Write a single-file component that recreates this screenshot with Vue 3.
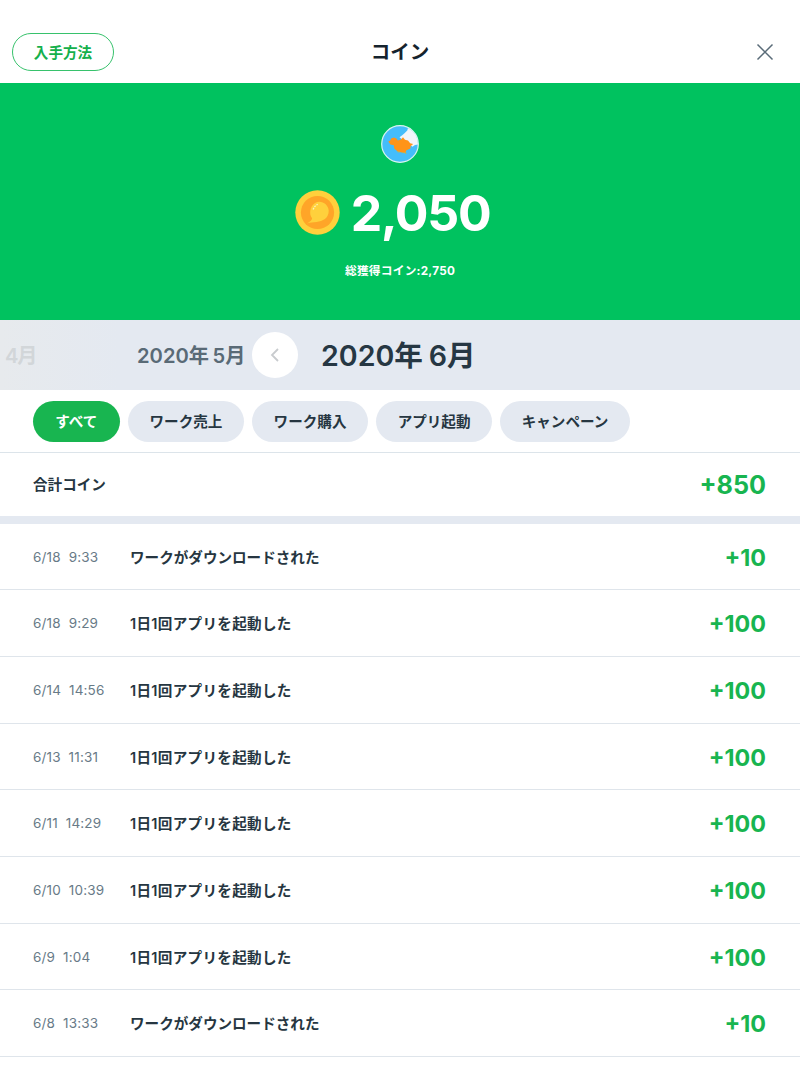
<template>
  <main class="coin-page">
    <header class="header">
      <button class="how-to">入手方法</button>
      <h1>コイン</h1>
      <button class="close" aria-label="閉じる">
        <svg width="18" height="18" viewBox="0 0 18 18">
          <path d="M1.5 1.5 16.5 16.5M16.5 1.5 1.5 16.5" fill="none" stroke="#596b78" stroke-width="1.5" />
        </svg>
      </button>
    </header>

    <section class="balance">
      <svg class="avatar" width="38" height="38" viewBox="0 0 38 38">
        <circle cx="19" cy="19" r="18.4" fill="#44bdfb" />
        <path d="M27 3.1 26.3 5.5 23.5 8.2 21.2 10.2 18.5 12.2 22 15 29.5 20.2 31.5 21.8 34 20 37 19.4A18.4 18.4 0 0 0 27 3.1Z" fill="#f2f5fa" />
        <path d="M7.3 16.6 9.2 15.4 10.2 13.4 13 12.4 15.4 13.6 16.8 15.4 20 14.4 22 12.3 24 14.8 27 15.6 29.2 18.2 32.1 19.1 29.6 21.3 29.4 23.5 25.4 25.2 24.5 27.2 20.5 27.5 16.4 26.3 13.2 23.6 12.8 20.2 9.4 19.5Z" fill="#ff9418" />
        <path d="M21.5 27.6H24.8V28.8M16.5 26.8H19" fill="none" stroke="#d8af35" stroke-width="1" />
        <circle cx="19" cy="19" r="18.3" fill="none" stroke="#d9f5ee" stroke-width="1.2" />
      </svg>
      <div class="amount">
        <svg width="45" height="45" viewBox="0 0 45 45">
          <circle cx="22.5" cy="22.5" r="22.2" fill="#ffd03c" />
          <circle cx="22.5" cy="22.5" r="16.6" fill="#ffa528" />
          <path d="M12.1 33.5C15.4 31.4 17 29.7 17.1 28.2 13.8 24.8 14.8 16.4 20 13.1 25.7 9.5 33.5 14.2 33.7 20.8 33.9 28.3 27.5 31.2 21.7 32.1 18 32.6 15.2 32.6 12.1 33.5Z" fill="#ffd03c" />
          <path d="M18.2 19.5Q19.2 16.2 22.7 14.2" fill="none" stroke="#fff1b9" stroke-width="1.3" stroke-dasharray="1.8 1" />
        </svg>
        <strong>2,050</strong>
      </div>
      <p class="total-earned">総獲得コイン:2,750</p>
    </section>

    <nav class="months">
      <span class="month older">4月</span>
      <span class="month previous">2020年 5月</span>
      <button class="month-back" aria-label="前の月">
        <svg width="10" height="16" viewBox="0 0 10 16">
          <path d="M8 2 2 8l6 6" fill="none" stroke="#c8cbce" stroke-width="1.8" />
        </svg>
      </button>
      <span class="month current">2020年 6月</span>
    </nav>

    <div class="filters">
      <button
        v-for="filter in filters"
        :key="filter"
        :class="{ active: filter === activeFilter }"
        @click="activeFilter = filter"
      >{{ filter }}</button>
    </div>

    <div class="summary">
      <span>合計コイン</span>
      <strong>+850</strong>
    </div>

    <ul class="history">
      <li v-for="item in history" :key="`${item.date}-${item.time}`">
        <span class="date">{{ item.date }}&nbsp; {{ item.time }}</span>
        <span class="label" :class="{ launched: item.label === launched }">{{ item.label }}</span>
        <strong>+{{ item.coins }}</strong>
      </li>
    </ul>
  </main>
</template>

<script setup>
import { ref } from 'vue'

const filters = ['すべて', 'ワーク売上', 'ワーク購入', 'アプリ起動', 'キャンペーン']
const activeFilter = ref('すべて')

const launched = '1日1回アプリを起動した'
const downloaded = 'ワークがダウンロードされた'

const history = [
  { date: '6/18', time: '9:33', label: downloaded, coins: 10 },
  { date: '6/18', time: '9:29', label: launched, coins: 100 },
  { date: '6/14', time: '14:56', label: launched, coins: 100 },
  { date: '6/13', time: '11:31', label: launched, coins: 100 },
  { date: '6/11', time: '14:29', label: launched, coins: 100 },
  { date: '6/10', time: '10:39', label: launched, coins: 100 },
  { date: '6/9', time: '1:04', label: launched, coins: 100 },
  { date: '6/8', time: '13:33', label: downloaded, coins: 10 }
]
</script>

<style>
body {
  overflow: hidden;
  background: #fff;
}
</style>

<style scoped>
.coin-page {
  width: 800px;
  height: 1067px;
  overflow: hidden;
  background: #fff;
  color: #263641;
  font-family: Inter, "Noto Sans CJK JP", sans-serif;
  font-size: 14.58px;
}

* {
  box-sizing: border-box;
}

button {
  padding: 0;
  border: 0;
  font: inherit;
}

.header {
  display: grid;
  grid-template-columns: 1fr auto 1fr;
  align-items: center;
  height: 83.4px;
  padding: 21px 26px 0 12px;
}

.how-to {
  width: 102px;
  height: 38px;
  padding-bottom: 2px;
  border: 1.4px solid #37c26c;
  border-radius: 19px;
  background: #fff;
  color: #15b04c;
  font-weight: 600;
}

h1 {
  margin: 0 0 0 14px;
  color: #15232d;
  font-size: 19.5px;
  font-weight: 600;
  line-height: 28px;
}

.close {
  display: grid;
  justify-self: end;
  background: none;
}

.balance {
  display: flex;
  flex-direction: column;
  align-items: center;
  height: 236.2px;
  padding-top: 41.5px;
  background: #00c25f;
  color: #fff;
}

.avatar {
  flex: none;
}

.amount {
  display: flex;
  align-items: center;
  gap: 11px;
  height: 60px;
  margin: 20px 15px 0 0;
}

.amount strong {
  font-size: 50px;
  font-weight: 700;
  line-height: 60px;
  letter-spacing: -1.3px;
}

.total-earned {
  margin: 19px 0 0;
  font-size: 11.7px;
  font-weight: 700;
  line-height: 18px;
  letter-spacing: 0.25px;
}

.months {
  display: flex;
  align-items: center;
  height: 70.6px;
  padding-left: 5px;
  background: linear-gradient(90deg, #e7eaed 0, #e4e9f1 120px, #e4e9f1 100%);
  white-space: nowrap;
}

.month {
  color: #596a76;
  font-size: 20.2px;
  font-weight: 600;
  word-spacing: -1.5px;
}

.older {
  width: 132px;
  color: #d2d6d9;
  letter-spacing: -1.3px;
}

.previous {
  width: 115px;
}

.month-back {
  display: grid;
  place-items: center;
  width: 46px;
  height: 46px;
  border-radius: 50%;
  background: #fff;
}

.current {
  margin: -2px 0 0 23px;
  color: #263743;
  font-size: 28.6px;
}

.filters {
  display: flex;
  gap: 8.4px;
  height: 63px;
  padding: 10.5px 33px 0;
  border-bottom: 1px solid #dce4ea;
}

.filters button {
  height: 41.6px;
  padding: 0 21.4px 1px;
  border-radius: 21px;
  background: #e4e9f1;
  color: #263641;
  font-weight: 600;
}

.filters .active {
  padding-right: 22.3px;
  padding-left: 22.3px;
  background: #18b550;
  color: #fff;
}

.summary {
  display: flex;
  align-items: center;
  justify-content: space-between;
  height: 70.6px;
  padding: 0 34px 0 33px;
  border-bottom: 8.3px solid #e4e9f1;
  font-weight: 600;
}

.summary span {
  padding-bottom: 2px;
}

.summary strong {
  padding-top: 1px;
  color: #18b550;
  font-size: 25.2px;
  font-weight: 700;
}

.history {
  margin: 0;
  padding: 0;
  list-style: none;
}

.history li {
  display: flex;
  align-items: center;
  height: 66.67px;
  padding: 0 34px 0 33px;
  border-bottom: 1px solid #dfe5eb;
}

.date {
  width: 97px;
  color: #687a87;
  font-size: 13.5px;
  letter-spacing: 0.16px;
  white-space: pre;
}

.label {
  flex: 1;
  padding-bottom: 1px;
  font-weight: 600;
}

.launched {
  letter-spacing: 0.3px;
}

.history strong {
  padding-top: 1px;
  color: #18b550;
  font-size: 23.3px;
  font-weight: 700;
}
</style>
